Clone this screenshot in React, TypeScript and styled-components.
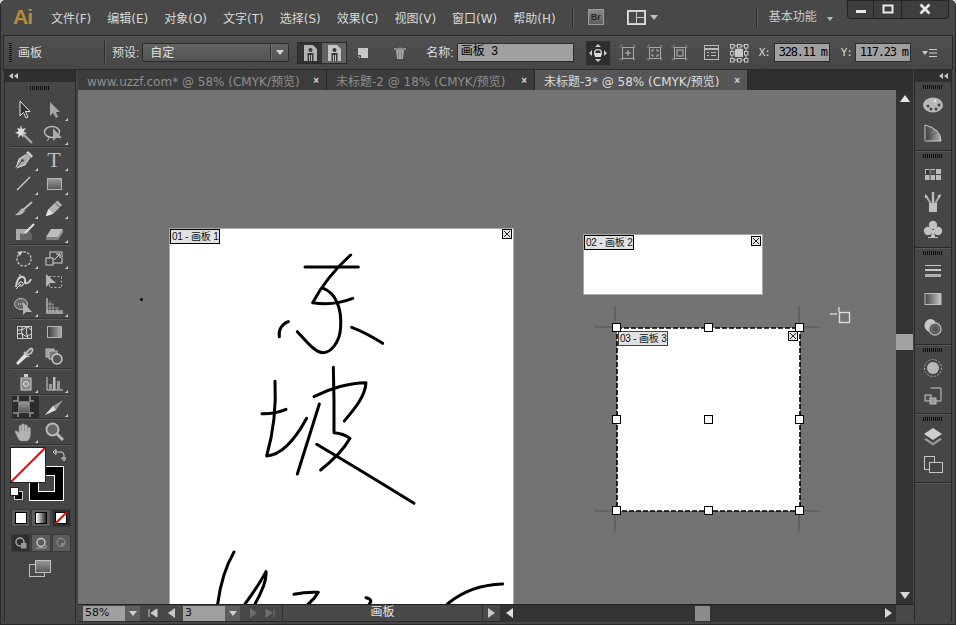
import React from "react";
import styled, { createGlobalStyle } from "styled-components";

const Global = createGlobalStyle`
  html, body { margin: 0; padding: 0; background: #d8d8d8; overflow: hidden; }
  * { box-sizing: border-box; }
`;
const UI = `"DejaVu Sans", "Noto Sans CJK SC", sans-serif`;
const CJK = `"Liberation Sans", "Noto Sans CJK SC", sans-serif`;

const Win = styled.div`
  width: 956px; height: 625px; background: #454545; display: flex; flex-direction: column;
  border-radius: 6px 6px 0 0; overflow: hidden; padding: 0 4px 3px; font: 12px ${UI}; color: #e0e0e0;
  box-shadow: inset 0 0 0 1px #2a2a2a;
`;
const Defs = styled.svg`display: block; width: 0; height: 0; flex: none;`;
const MenuBar = styled.div`height: 35px; flex: none; display: flex; align-items: flex-start; padding: 0 6px 0 12px; background: #484848; margin: 0 -3px;`;
const Logo = styled.div`font: bold 21px/34px "Liberation Sans", sans-serif; letter-spacing: -1px; color: #b98a3e; width: 38px; height: 35px; flex: none;`;
const MenuItems = styled.div`display: flex; gap: 16px; height: 35px; align-items: center; flex: none;`;
const MenuItem = styled.span`color: #d8d8d8; font-size: 12px; white-space: nowrap; margin-top: -1px;`;
const VSep = styled.div<{ $ml: number }>`height: 21px; background: #2e2e2e; border-right: 1px solid #5c5c5c; margin: 7px 0 0 ${p => p.$ml}px; flex: none; width: 2px;`;
const BrBox = styled.div`width: 16px; height: 16px; margin: 9px 0 0 14px; background: linear-gradient(#8a8a8a, #5e5e5e); border: 1px solid #9c9c9c; color: #2a2a2a; font: bold 9px/14px "Liberation Sans", sans-serif; text-align: center; flex: none;`;
const ArrangeWrap = styled.div`display: flex; align-items: center; margin: 9px 0 0 23px; height: 17px; gap: 4px; flex: none;`;
const Workspace = styled.span`margin: 7px 0 0 11px; width: 58px; font-size: 12px; color: #c8c8c8; white-space: nowrap; flex: none;`;
const WorkspaceTri = styled.div`margin-top: 17px; flex: none;`;
const WinBtns = styled.div`display: flex; width: 102px; height: 19px; margin-left: auto; background: #3e3e3e; border: 1px solid #222; border-top: none; border-radius: 0 0 4px 4px; flex: none; box-shadow: inset 0 1px 0 #2a2a2a;`;
const WinBtn = styled.div<{ $w: number }>`width: ${p => p.$w}px; display: flex; align-items: center; justify-content: center; border-right: 1px solid #262626; &:last-child { border-right: none; }`;
const SmallTri = styled.i<{ $c?: string; $s?: number }>`display: block; width: 0; height: 0; border-left: ${p => p.$s ?? 4}px solid transparent; border-right: ${p => p.$s ?? 4}px solid transparent; border-top: ${p => (p.$s ?? 4) + 1}px solid ${p => p.$c || "#bdbdbd"}; flex: none;`;

const ControlBar = styled.div`height: 35px; flex: none; display: flex; align-items: center; padding-left: 5px; margin: 0 -1px; background: linear-gradient(#505050, #464646); border: 1px solid #2a2a2a;`;
const CGrip = styled.div`width: 3px; height: 19px; background: repeating-linear-gradient(#141414 0 1px, transparent 1px 2px); flex: none;`;
const CLabel = styled.span<{ $ml: number; $w?: number }>`margin-left: ${p => p.$ml}px; font: 12px ${CJK}; color: #dcdcdc; white-space: nowrap; flex: none; padding-bottom: 3px; ${p => p.$w ? `width:${p.$w}px;` : ""}`;
const CSep = styled.div<{ $ml: number }>`width: 1px; height: 24px; background: #2e2e2e; box-shadow: 1px 0 0 #5a5a5a; margin-left: ${p => p.$ml}px; flex: none;`;
const Select = styled.div`margin-left: 3px; width: 147px; height: 19px; background: linear-gradient(#646464, #525252); border: 1px solid #2c2c2c; border-radius: 2px; display: flex; align-items: center; padding-left: 7px; font: 12px ${CJK}; color: #e0e0e0; flex: none;`;
const SelectText = styled.span`flex: 1; padding-bottom: 2px;`;
const SelectDrop = styled.div`width: 18px; height: 15px; border-left: 1px solid #2e2e2e; box-shadow: inset 1px 0 0 #707070; display: flex; align-items: center; justify-content: center; flex: none;`;
const Seg = styled.div`display: flex; margin-left: 8px; height: 22px; border: 1px solid #2a2a2a; background: #333; flex: none;`;
const SegBtn = styled.div<{ $on?: boolean }>`width: 24px; display: flex; align-items: center; justify-content: center; background: ${p => p.$on ? "#333" : "#626262"};`;
const CIcon = styled.div<{ $ml: number; $w?: number }>`margin-left: ${p => p.$ml}px; width: ${p => p.$w || 20}px; height: 22px; display: flex; align-items: center; justify-content: center; flex: none;`;
const Field = styled.div<{ $ml: number; $w: number; $mono?: boolean }>`
  margin-left: ${p => p.$ml}px; width: ${p => p.$w}px; height: 19px; background: #a0a0a0; border: 1px solid #2c2c2c; color: #000; flex: none; white-space: pre;
  font: ${p => p.$mono ? `12px/17px "DejaVu Sans Mono", monospace` : `12px/15px ${CJK}`}; padding-left: ${p => p.$mono ? 4 : 3}px; letter-spacing: ${p => p.$mono ? "-1.2px" : "0"};
`;
const MoveBtn = styled.div`margin-left: 12px; width: 24px; height: 24px; background: #2e2e2e; display: flex; align-items: center; justify-content: center; flex: none;`;
const AxisLabel = styled.span<{ $ml: number }>`margin-left: ${p => p.$ml}px; width: 13px; font: 11px "DejaVu Sans Mono", monospace; color: #d8d8d8; letter-spacing: -1px; flex: none;`;

const Body = styled.div`flex: 1; min-height: 0; display: flex;`;
const LeftDock = styled.div`width: 72px; flex: none; margin-right: 2px; display: flex; flex-direction: column; background: #464646; border-left: 1px solid #2a2a2a; border-right: 1px solid #2a2a2a;`;
const DockHead = styled.div<{ $right?: boolean }>`height: 12px; flex: none; background: #2f2f2f; color: #c0c0c0; display: flex; align-items: center; justify-content: ${p => p.$right ? "flex-end" : "flex-start"}; padding: 0 ${p => p.$right ? "3px" : "0"} 0 ${p => p.$right ? "0" : "4px"};`;
const DTri = styled.i`display: block; width: 0; height: 0; border-top: 3px solid transparent; border-bottom: 3px solid transparent; border-right: 4px solid #c8c8c8; margin-right: 0.5px;`;
const Grip = styled.div<{ $dock?: boolean }>`width: 20px; height: 4px; background: repeating-linear-gradient(90deg, #0e0e0e 0 1px, transparent 1px 2px); flex: none; margin: ${p => p.$dock ? "3px 0 2px" : "4px 0 8px 25px"};`;
const Tools = styled.div`display: flex; flex-direction: column; flex: none;`;
const ToolRow = styled.div<{ $h?: number }>`height: ${p => p.$h ?? 24}px; display: flex; padding-left: 4px; flex: none;`;
const ToolCell = styled.div<{ $more?: boolean; $on?: boolean }>`
  width: 30px; display: flex; align-items: center; justify-content: center; position: relative; color: #c8c8c8;
  ${p => p.$on ? `&::before { content: ""; position: absolute; left: 3px; top: 0; width: 27px; height: 22px; background: #2c2c2c; border-radius: 2px; }` : ""}
  & > svg, & > span { position: relative; }
  ${p => p.$more ? `&::after { content: ""; position: absolute; right: 1px; bottom: 1px; width: 0; height: 0; border-left: 3px solid transparent; border-bottom: 3px solid #d0d0d0; }` : ""}
`;
const Sep = styled.div`height: 2px; margin: 0 4px 0 5px; background: #343434; border-bottom: 1px solid #585858; flex: none;`;
const TextT = styled.span`font: 22px/24px "Liberation Serif", serif; color: #bdbdbd;`;
const FillStroke = styled.div`position: relative; height: 56px; flex: none;`;
const StrokeBox = styled.div`position: absolute; left: 24px; top: 20px; width: 35px; height: 35px; background: #000; border: 1px solid #fff; display: flex; align-items: center; justify-content: center;`;
const StrokeHole = styled.div`width: 17px; height: 17px; background: #454545; border: 1px solid #fff;`;
const FillBox = styled.div`position: absolute; left: 5px; top: 1px; width: 36px; height: 36px; background: #fff; border: 1px solid #222;`;
const Abs = styled.div<{ $l: number; $t: number }>`position: absolute; left: ${p => p.$l}px; top: ${p => p.$t}px; line-height: 0;`;
const ModeRow = styled.div`display: flex; gap: 1px; margin: 7px 0 0 6px; height: 18px; width: 60px; flex: none;`;
const ModeBtn = styled.div<{ $on?: boolean }>`flex: 1; background: ${p => p.$on ? "#2e2e2e" : "#5c5c5c"}; border: 1px solid #3a3a3a; display: flex; align-items: center; justify-content: center;`;
const Swatch = styled.div<{ $kind: string }>`width: 12px; height: 12px; border: 1px solid #000; background: ${p => p.$kind === "grad" ? "linear-gradient(90deg,#fff,#222)" : "#fff"};`;
const ScreenMode = styled.div`display: flex; justify-content: center; margin-top: 8px; flex: none;`;

const DocArea = styled.div`flex: 1; min-width: 0; display: flex; flex-direction: column;`;
const Tabs = styled.div`height: 20px; flex: none; display: flex; background: #2f2f2f;`;
const Tab = styled.div<{ $w: number; $on?: boolean }>`
  width: ${p => p.$w}px; flex: none; display: flex; align-items: center; justify-content: space-between; padding: 0 7px 0 9px; white-space: pre;
  background: ${p => p.$on ? "#565656" : "#3c3c3c"}; color: ${p => p.$on ? "#dedede" : "#8e8e8e"}; border-right: 1px solid #282828; font-size: 12px;
`;
const TabClose = styled.span`font: bold 10px "Liberation Sans", sans-serif; color: #d8d8d8;`;
const Mid = styled.div`flex: 1; min-height: 0; display: flex;`;
const Canvas = styled.div`flex: 1; position: relative; overflow: hidden; background: #737373;`;
const Board = styled.div<{ $x: number; $y: number; $w: number; $h: number; $sel?: boolean }>`
  position: absolute; left: ${p => p.$x}px; top: ${p => p.$y}px; width: ${p => p.$w}px; height: ${p => p.$h}px; background: #fff;
  border: ${p => p.$sel ? "none" : "1px solid #a8a8a8"};
`;
const BoardLabel = styled.div<{ $x: number; $y: number; $soft?: boolean }>`
  position: absolute; left: ${p => p.$x}px; top: ${p => p.$y}px; height: 15px; width: 50px; background: #e2e2e2; border: 1px solid ${p => p.$soft ? "#444" : "#000"};
  color: #111; font: 10px/13px ${CJK}; padding-left: 1px; white-space: pre; z-index: 2; letter-spacing: -0.2px;
`;
const BoardClose = styled.div<{ $x: number; $y: number }>`position: absolute; left: ${p => p.$x}px; top: ${p => p.$y}px; line-height: 0; z-index: 2;`;
const Handle = styled.div<{ $x: number; $y: number }>`
  position: absolute; left: ${p => p.$x}%; top: ${p => p.$y}%; width: 9px; height: 9px; margin: -5px 0 0 -5px; background: #fff; border: 1px solid #000; z-index: 3;
`;
const Stroke = styled.svg`position: absolute; left: 0; top: 0; display: block;`;
const Dashes = styled.svg`position: absolute; left: 0; top: 0; display: block; overflow: visible;`;
const Marks = styled.svg`position: absolute; display: block;`;
const Dot = styled.div`position: absolute; left: 62px; top: 208px; width: 3px; height: 3px; border-radius: 50%; background: #000;`;
const VScroll = styled.div`width: 17px; flex: none; background: #333; display: flex; flex-direction: column; align-items: center; justify-content: space-between; padding: 5px 0; position: relative;`;
const Thumb = styled.div`position: absolute; left: 0; top: 244px; width: 17px; height: 16px; background: #a2a2a2;`;
const UpTri = styled.i<{ $down?: boolean; $c?: string }>`display: block; width: 0; height: 0; border-left: 5px solid transparent; border-right: 5px solid transparent; ${p => p.$down ? `border-top: 7px solid ${p.$c || "#d8d8d8"};` : `border-bottom: 7px solid ${p.$c || "#e8e8e8"};`}`;
const Status = styled.div`height: 18px; flex: none; display: flex; align-items: center; background: #484848; border-top: 1px solid #222; border-bottom: 1px solid #2a2a2a;`;
const ZoomField = styled.div<{ $ml: number }>`width: 42px; height: 15px; margin-left: ${p => p.$ml}px; background: #a0a0a0; color: #111; font: 11px/14px ${UI}; padding-left: 2px; flex: none;`;
const DropBtn = styled.div`width: 15px; height: 15px; background: #5e5e5e; display: flex; align-items: center; justify-content: center; flex: none;`;
const NavIcon = styled.div<{ $ml: number }>`margin-left: ${p => p.$ml}px; width: 12px; height: 14px; display: flex; align-items: center; justify-content: center; flex: none;`;
const StatusLabel = styled.div`width: 201px; flex: none; text-align: center; font: 12px/15px ${CJK}; color: #e6e6e6; border-left: 1px solid #333; border-right: 1px solid #333; margin-left: 6px; height: 16px;`;
const HScroll = styled.div`flex: 1; height: 17px; margin-left: 3px; background: #333; display: flex; align-items: center; justify-content: space-between; padding: 0 4px 0 6px; position: relative;`;
const HThumb = styled.div`position: absolute; left: 195px; top: 1px; width: 15px; height: 15px; background: #8c8c8c;`;
const SideTri = styled.i<{ $left?: boolean; $c?: string }>`display: block; width: 0; height: 0; border-top: 5px solid transparent; border-bottom: 5px solid transparent; ${p => p.$left ? `border-right: 7px solid ${p.$c || "#e0e0e0"};` : `border-left: 7px solid ${p.$c || "#d8d8d8"};`}`;
const Corner = styled.div`width: 17px; height: 17px; flex: none; background: #484848;`;

const RightDock = styled.div`width: 38px; flex: none; margin-left: 1px; display: flex; flex-direction: column; background: #464646; border-left: 1px solid #2a2a2a; border-right: 1px solid #2a2a2a;`;
const DockGroup = styled.div`display: flex; flex-direction: column; align-items: center; border-bottom: 1px solid #2a2a2a; flex: none; padding-bottom: 3px; box-shadow: 0 1px 0 #585858;`;
const DockIcon = styled.div`height: 28px; width: 100%; display: flex; align-items: center; justify-content: center; flex: none;`;

const Svg: React.FC<{ s?: number; w?: number; h?: number; children: React.ReactNode }> = ({ s = 24, w, h, children }) => (
  <svg width={w ?? s} height={h ?? s} viewBox={`0 0 ${w ?? s} ${h ?? s}`} fill="none" style={{ display: "block" }}>{children}</svg>
);

const icons: Record<string, React.ReactNode> = {
  select: <path d="M8 3V18L11.5 14.5L14 20L16 19L13.5 13.5H18Z" fill="#333" stroke="#e4e4e4" />,
  direct: <path d="M8 4V18L11 15L14 20L16 19L14 14H18Z" fill="#a8a8a8" />,
  wand: <><path d="M9 3L10 7L14 6L11.5 9.5L15 11.5L11 12L11.5 16L9 13L6 16L6.5 12L3 11L6.5 9L5 5.5L8 7Z" fill="#dcdcdc" /><path d="M11 12L20 21" stroke="#aaa" strokeWidth="2.2" /></>,
  lasso: <><ellipse cx="10" cy="10" rx="7.5" ry="5.5" stroke="#bbb" strokeWidth="1.4" /><path d="M6 15Q8 17 5 19" stroke="#bbb" /><path d="M11 6V19L14 16L20 16Z" fill="#ababab" /></>,
  pen: <><path d="M4 20L7 11L14 6.5L17.5 10L13 17Z" fill="#aaa" stroke="#ddd" /><path d="M4 20L10 13" stroke="#444" /><circle cx="10.5" cy="12.5" r="1.3" fill="#444" /><path d="M15 4L20 9" stroke="#ccc" strokeWidth="3" /></>,
  line: <path d="M5 18L18 5" stroke="#cfcfcf" strokeWidth="1.2" />,
  rect: <rect x="5.5" y="6.5" width="14" height="11" fill="url(#gv)" stroke="#b4b4b4" />,
  brush: <><path d="M20 6L11 14" stroke="#bbb" strokeWidth="2" /><path d="M3 19Q10 20 13 15L10 12Q7 16 3 19Z" fill="#b5b5b5" /></>,
  pencil: <><path d="M4 20L6.5 13.5L15.5 5L19.5 9L11 17.5Z" fill="#b4b4b4" stroke="#ddd" strokeWidth=".6" /><path d="M4 20L6.5 13.5L11 17.5Z" fill="#e4e4e4" /><path d="M13.5 7L17.5 11" stroke="#555" /></>,
  blob: <><path d="M4 9H17V20H4Z" fill="#aaa" /><path d="M8 13Q13 16 17 11L20 14V20H8Z" fill="#666" /><path d="M22 4L13 13" stroke="#ddd" strokeWidth="2.2" /></>,
  eraser: <><path d="M4 17L9 9H21L16 17Z" fill="#bdbdbd" /><path d="M4 17H16V20H4Z" fill="#808080" /><path d="M16 17L21 9V12L16 20Z" fill="#999" /></>,
  rotate: <><circle cx="12" cy="13" r="7" stroke="#bbb" strokeWidth="1.4" strokeDasharray="2.6 1.4" /><path d="M5 6L11 5L8 10Z" fill="#ccc" /></>,
  scale: <><rect x="8" y="6" width="12" height="11" stroke="#bbb" strokeWidth="1.2" /><rect x="4" y="12" width="7" height="7" fill="#464646" stroke="#bbb" strokeWidth="1.2" /><path d="M12 14L18 8M14 8H18V12" stroke="#ddd" /></>,
  warp: <><path d="M4 17Q5 8 9 7Q14 6 13 13Q17 14 19 9" stroke="#ccc" strokeWidth="2" /><circle cx="9" cy="14" r="2.2" fill="#464646" stroke="#eee" /><path d="M4 19L9 14M8 7V4" stroke="#ddd" /></>,
  free: <><rect x="7.5" y="6.5" width="12" height="11" stroke="#bbb" strokeDasharray="2 2" /><path d="M4 4V17L8 13H14Z" fill="#b4b4b4" /></>,
  builder: <><ellipse cx="9" cy="10" rx="6.5" ry="5.5" fill="#666" stroke="#bbb" /><path d="M6 10H12" stroke="#eee" strokeDasharray="1 1" /><path d="M11 8V21L14 18H20Z" fill="#b4b4b4" /></>,
  persp: <><path d="M5 4V19H21" stroke="#bbb" strokeWidth="1.4" /><path d="M8 7V19M11 10V19M15 14V19M5 10L11 10M5 14L17 14" stroke="#999" /><path d="M5 17H21" stroke="#ddd" /></>,
  mesh: <><rect x="5.5" y="6.5" width="14" height="12" fill="#444" stroke="#ccc" /><path d="M6 10Q10 11 13 8T19 10M6 14Q10 12 12 15T19 14M10 7Q9 12 11 18M15 7Q13 12 16 18" stroke="#ddd" /></>,
  grad: <rect x="5.5" y="6.5" width="14" height="11" fill="url(#gh)" stroke="#b4b4b4" />,
  drop: <><path d="M5 20L4 19L13 9L16 12L6 21Z" fill="#e0e0e0" /><path d="M12 8L17 13M14 9L18 5Q20 4 20.5 5.5T19 9L15.5 11Z" stroke="#bbb" strokeWidth="2" /></>,
  blend: <><rect x="4" y="5" width="8" height="8" fill="#999" stroke="#bbb" /><rect x="7" y="7" width="8" height="8" fill="#777" stroke="#bbb" /><circle cx="15" cy="15" r="5" fill="#555" stroke="#ccc" strokeWidth="1.4" /></>,
  spray: <><path d="M3 6h.1M6 4h.1M8 6h.1M5 8h.1M8 9h.1M11 5h.1" stroke="#ddd" strokeWidth="1.4" /><rect x="12" y="4" width="4" height="3" fill="#ccc" /><rect x="9" y="8" width="10" height="12" fill="#888" stroke="#ccc" /><circle cx="14" cy="14" r="2.4" stroke="#eee" /></>,
  graph: <><path d="M5 7V20H21" stroke="#ccc" /><rect x="7" y="14" width="3" height="6" fill="#999" /><rect x="11" y="7" width="2.5" height="13" fill="#bbb" /><rect x="15" y="11" width="3" height="9" fill="#999" /></>,
  artboard: <><rect x="6.5" y="6.5" width="11" height="11" fill="url(#gv)" stroke="#777" /><path d="M1 6H22M1 18H22M6 1V22M18 1V22" stroke="#c8c8c8" strokeDasharray="5 12 5" /></>,
  slice: <><path d="M3 20L11 11L21 5L14 15Z" fill="#999" /><path d="M3 20L11 11L14 15Z" fill="#ddd" /></>,
  hand: <path d="M7 20L3 12Q3 10 5 11L7 13V6Q8 4.5 9.5 6V11V4.5Q11 3 12.5 4.5V11V5.5Q14 4 15.5 5.5V11.5V8Q17 6.5 18.5 8V15Q18 20 15 21H9Z" fill="#b4b4b4" stroke="#888" strokeWidth=".5" />,
  zoom: <><circle cx="10.5" cy="9.5" r="6" fill="#666" stroke="#b8b8b8" strokeWidth="2" /><path d="M15 14L21 20" stroke="#b8b8b8" strokeWidth="3" /></>,
  palette: <><ellipse cx="12" cy="12" rx="10" ry="7.5" fill="#b8b8b8" /><circle cx="7" cy="13" r="1.5" fill="#444" /><circle cx="10" cy="16" r="1.5" fill="#444" /><circle cx="15" cy="16" r="1.5" fill="#444" /><circle cx="18" cy="12" r="1.5" fill="#444" /><circle cx="14" cy="8" r="1.5" fill="#ddd" /></>,
  guide: <><path d="M4 4V20H20Q20 8 4 4Z" fill="url(#gh)" stroke="#ccc" /><path d="M4 20L11 7M4 20L16 11" stroke="#4a4a4a" strokeWidth=".6" /></>,
  swatches: <><rect x="4" y="7" width="16" height="11" fill="#bbb" /><path d="M9 7V18M14.5 7V18M4 12.5H20" stroke="#464646" /><rect x="5" y="8" width="3.5" height="4" fill="#333" /><rect x="10" y="8" width="4" height="4" fill="#555" /></>,
  cup: <><rect x="8" y="13" width="8" height="9" fill="#c0c0c0" /><path d="M12 13V2" stroke="#bbb" strokeWidth="2.4" /><path d="M9.5 13L5 6M14.5 13L18 7" stroke="#aaa" strokeWidth="2" /><path d="M4 4L7 7L4 8ZM16 6L20 4L19 8Z" fill="#ccc" /></>,
  club: <><circle cx="12" cy="7" r="4.2" fill="#c2c2c2" /><circle cx="7" cy="13" r="4.2" fill="#c2c2c2" /><circle cx="17" cy="13" r="4.2" fill="#c2c2c2" /><path d="M11 12H13L14 19H17V20H7V19H10Z" fill="#c2c2c2" /></>,
  stroke: <><path d="M4 6.5H20" stroke="#c8c8c8" /><path d="M4 11H20" stroke="#c8c8c8" strokeWidth="2" /><path d="M4 16.5H20" stroke="#b0b0b0" strokeWidth="3" /></>,
  gradR: <rect x="4" y="6.5" width="16" height="11" fill="url(#gh2)" stroke="#bbb" />,
  transp: <><ellipse cx="9.5" cy="10.5" rx="6" ry="6.5" fill="#c8c8c8" /><circle cx="14" cy="14" r="6" fill="#555" stroke="#b4b4b4" strokeWidth="1.4" /><circle cx="14" cy="14" r="3.5" stroke="#777" /></>,
  appear: <><circle cx="12" cy="12" r="8.5" stroke="#a8a8a8" strokeDasharray="2 1.5" /><circle cx="12" cy="12" r="6" fill="#b8b8b8" /></>,
  styles: <><path d="M9.5 4H20V17H9.5V11" stroke="#c8c8c8" /><rect x="4" y="11" width="6" height="6" fill="#555" stroke="#c8c8c8" /><rect x="9" y="14" width="6" height="6" fill="#999" stroke="#bbb" /></>,
  layers: <><path d="M12 3L21 9L12 15L3 9Z" fill="#cfcfcf" /><path d="M5 13L12 18L19 13L21 14.5L12 20.5L3 14.5Z" fill="#999" /></>,
  boards: <><rect x="3.5" y="3.5" width="10" height="13" fill="#464646" stroke="#c8c8c8" /><rect x="8.5" y="9.5" width="13" height="10" fill="#464646" stroke="#c8c8c8" /></>,
};

const Ic: React.FC<{ n: string }> = ({ n }) => <Svg>{icons[n]}</Svg>;

const toolGroups: [string, boolean][][][] = [
  [[["select", false], ["direct", true]], [["wand", false], ["lasso", true]]],
  [[["pen", true], ["T", true]], [["line", true], ["rect", true]], [["brush", true], ["pencil", true]], [["blob", false], ["eraser", true]]],
  [[["rotate", true], ["scale", true]], [["warp", true], ["free", false]], [["builder", true], ["persp", true]]],
  [[["mesh", false], ["grad", false]], [["drop", true], ["blend", false]]],
  [[["spray", true], ["graph", true]]],
  [[["artboard", false], ["slice", true]]],
  [[["hand", true], ["zoom", false]]],
];

const dockGroups = [["palette", "guide"], ["swatches", "cup", "club"], ["stroke", "gradR", "transp"], ["appear", "styles"], ["layers", "boards"]];
const menu = ["文件(F)", "编辑(E)", "对象(O)", "文字(T)", "选择(S)", "效果(C)", "视图(V)", "窗口(W)", "帮助(H)"];
const handles = [0, 50, 100].flatMap(y => [0, 50, 100].map(x => ({ x, y })));

const CloseBox = () => (
  <svg width="10" height="10" viewBox="0 0 10 10" style={{ display: "block" }}>
    <rect x=".5" y=".5" width="9" height="9" fill="#e4e4e4" stroke="#000" /><path d="M2 2L8 8M8 2L2 8" stroke="#222" />
  </svg>
);
const Person: React.FC<{ light?: boolean }> = ({ light }) => (
  <Svg w={15} h={18}>
    <path d="M1 1H10L14 5V17H1Z" fill={light ? "#c4c4c4" : "#b4b4b4"} />
    <circle cx="7.5" cy="6" r="2" fill="#3a3a3a" /><path d="M4.5 17V9H10.5V17H9V11H8V17H7V11H6V17Z" fill="#3a3a3a" />
  </Svg>
);
const Frame: React.FC<{ kind: string }> = ({ kind }) => (
  <Svg w={18} h={18}>
    <path d="M3 .5V17M15 .5V17M.5 3H17M.5 15H17" stroke="#8e8e8e" strokeDasharray="2 12 2" />
    <rect x="3.5" y="3.5" width="11" height="11" stroke="#a8a8a8" />
    {kind === "plus" && <path d="M9 6V12M6 9H12" stroke="#bbb" />}
    {kind === "corners" && <path d="M6 8V6H8M10 6H12V8M12 10V12H10M8 12H6V10" stroke="#bbb" />}
    {kind === "rect" && <rect x="6" y="6" width="6" height="6" stroke="#bbb" />}
  </Svg>
);

export default function App() {
  return (
    <>
      <Global />
      <Win>
        <Defs aria-hidden="true">
          <defs>
            <linearGradient id="gv" x1="0" y1="0" x2="0" y2="1"><stop offset="0" stopColor="#9a9a9a" /><stop offset="1" stopColor="#565656" /></linearGradient>
            <linearGradient id="gh" x1="0" y1="0" x2="1" y2="0"><stop offset="0" stopColor="#3a3a3a" /><stop offset="1" stopColor="#b0b0b0" /></linearGradient>
            <linearGradient id="gh2" x1="0" y1="0" x2="1" y2="0"><stop offset="0" stopColor="#444" /><stop offset="1" stopColor="#c8c8c8" /></linearGradient>
          </defs>
        </Defs>
        <MenuBar>
          <Logo>Ai</Logo>
          <MenuItems>{menu.map(m => <MenuItem key={m}>{m}</MenuItem>)}</MenuItems>
          <VSep $ml={16} />
          <BrBox>Br</BrBox>
          <ArrangeWrap>
            <Svg w={19} h={15}><rect x=".5" y=".5" width="18" height="14" fill="#c8c8c8" stroke="#ddd" /><rect x="2" y="2" width="7" height="11" fill="#4a4a4a" /><rect x="10" y="2" width="7" height="5" fill="#4a4a4a" /><rect x="10" y="8" width="7" height="5" fill="#4a4a4a" /></Svg>
            <SmallTri />
          </ArrangeWrap>
          <VSep $ml={98} />
          <Workspace>基本功能</Workspace>
          <WorkspaceTri><SmallTri $s={3} /></WorkspaceTri>
          <WinBtns>
            <WinBtn $w={27}><Svg w={12} h={12}><rect x="1" y="7" width="10" height="3" fill="#e8e8e8" /></Svg></WinBtn>
            <WinBtn $w={28}><Svg w={12} h={12}><rect x="1.5" y="2.5" width="9" height="7" stroke="#e8e8e8" strokeWidth="2" /></Svg></WinBtn>
            <WinBtn $w={47}><Svg w={12} h={12}><path d="M1.5 1.5L10.5 10.5M10.5 1.5L1.5 10.5" stroke="#e8e8e8" strokeWidth="2.6" /></Svg></WinBtn>
          </WinBtns>
        </MenuBar>

        <ControlBar>
          <CGrip />
          <CLabel $ml={6} $w={62}>画板</CLabel>
          <CSep $ml={24} />
          <CLabel $ml={7}>预设:</CLabel>
          <Select><SelectText>自定</SelectText><SelectDrop><SmallTri $c="#d0d0d0" /></SelectDrop></Select>
          <Seg><SegBtn $on><Person /></SegBtn><SegBtn><Person light /></SegBtn></Seg>
          <CIcon $ml={6}><Svg w={12} h={12}><path d="M1 1H11V11H4V8H1Z" fill="#c8c8c8" /><path d="M1 9L3 11" stroke="#c8c8c8" /></Svg></CIcon>
          <CIcon $ml={17}><Svg w={14} h={14}><path d="M3 4H11L10 13H4Z" fill="#a8a8a8" /><path d="M5 2H9M5.5 5V12M8.5 5V12" stroke="#777" /><path d="M1 3H13" stroke="#c4c4c4" /></Svg></CIcon>
          <CLabel $ml={16}>名称:</CLabel>
          <Field $ml={3} $w={117}>画板  3</Field>
          <MoveBtn><Svg s={20}><circle cx="10" cy="10" r="3.4" stroke="#ccc" strokeWidth="1.4" /><rect x="7" y="10" width="6" height="4" fill="#ddd" /><path d="M10 1L7 4H13ZM10 19L7 16H13ZM1 10L4 7V13ZM19 10L16 7V13Z" fill="#ccc" /></Svg></MoveBtn>
          <CIcon $ml={8}><Frame kind="plus" /></CIcon>
          <CIcon $ml={7}><Frame kind="corners" /></CIcon>
          <CIcon $ml={5}><Frame kind="rect" /></CIcon>
          <CIcon $ml={12}><Svg w={15} h={15}><rect x=".5" y=".5" width="14" height="14" stroke="#bbb" /><path d="M1 4H14" stroke="#bbb" strokeWidth="2" /><path d="M3 7.5H5M7 7.5H12M3 10.5H5M7 10.5H12" stroke="#bbb" /></Svg></CIcon>
          <CIcon $ml={7}><Svg w={20} h={20}>{[1, 8, 15].flatMap(y => [1, 8, 15].map(x => (x === 8 && y === 8
            ? <rect key={x + "-" + y} x="6" y="6" width="8" height="8" fill="#c8c8c8" />
            : <rect key={x + "-" + y} x={x + .5} y={y + .5} width="3.5" height="3.5" stroke="#c8c8c8" />)))}<path d="M5 3H8M12 3H15M5 17H8M12 17H15M3 5V8M3 12V15M17 5V8M17 12V15" stroke="#c8c8c8" /></Svg></CIcon>
          <AxisLabel $ml={10}>X:</AxisLabel>
          <Field $ml={2} $w={56} $mono>328.11 m</Field>
          <AxisLabel $ml={11}>Y:</AxisLabel>
          <Field $ml={1} $w={56} $mono>117.23 m</Field>
          <CIcon $ml={9}><Svg w={16} h={10}><path d="M0 3H6L3 7Z" fill="#ccc" /><path d="M7 1.5H15M7 5H15M7 8.5H15" stroke="#ccc" /></Svg></CIcon>
        </ControlBar>

        <Body>
          <LeftDock>
            <DockHead><DTri /><DTri /></DockHead>
            <Grip />
            <Tools>
              {toolGroups.map((group, gi) => (
                <React.Fragment key={gi}>
                  {gi > 0 && <Sep />}
                  {group.map((row, ri) => (
                    <ToolRow key={ri} $h={row[0][0] === "artboard" ? 22 : 24}>
                      {row.map(([n, more]) => (
                        <ToolCell key={n} $more={more} $on={n === "artboard"}>
                          {n === "T" ? <TextT>T</TextT> : <Ic n={n} />}
                        </ToolCell>
                      ))}
                    </ToolRow>
                  ))}
                </React.Fragment>
              ))}
              <Sep />
            </Tools>
            <FillStroke>
              <StrokeBox><StrokeHole /></StrokeBox>
              <FillBox><Svg w={34} h={34}><path d="M0 34L34 0" stroke="#f00" strokeWidth="2" /></Svg></FillBox>
              <Abs $l={47} $t={2}><Svg w={14} h={14}><path d="M3 4H9Q12 4 12 7V11M1 4L4 1.5V6.5ZM12 13L9.5 10H14.5Z" stroke="#ccc" fill="none" strokeWidth="1" /></Svg></Abs>
              <Abs $l={5} $t={41}><Svg w={13} h={13}><rect x="4.5" y="4.5" width="8" height="8" fill="#000" stroke="#ccc" /><rect x=".5" y=".5" width="8" height="8" fill="#fff" stroke="#222" /></Svg></Abs>
            </FillStroke>
            <ModeRow>
              <ModeBtn><Swatch $kind="white" /></ModeBtn>
              <ModeBtn><Swatch $kind="grad" /></ModeBtn>
              <ModeBtn $on><Svg w={12} h={12}><rect x=".5" y=".5" width="11" height="11" fill="#fff" stroke="#000" /><path d="M0 12L12 0" stroke="#f00" strokeWidth="2" /></Svg></ModeBtn>
            </ModeRow>
            <ModeRow>
              <ModeBtn $on><Svg w={14} h={14}><circle cx="6" cy="6" r="4" stroke="#aaa" strokeWidth="1.4" /><rect x="7" y="7" width="5.5" height="5.5" fill="#999" /></Svg></ModeBtn>
              <ModeBtn><Svg w={14} h={14}><circle cx="7" cy="6.5" r="4" stroke="#ccc" strokeWidth="1.4" /><path d="M2 12H12V9" stroke="#aaa" /></Svg></ModeBtn>
              <ModeBtn><Svg w={14} h={14}><circle cx="7" cy="6.5" r="4" stroke="#888" strokeWidth="1.4" /><rect x="7" y="7" width="3" height="3" fill="#888" /></Svg></ModeBtn>
            </ModeRow>
            <ScreenMode><Svg w={22} h={17}><rect x=".5" y="4.5" width="15" height="12" fill="#4a4a4a" stroke="#c0c0c0" /><rect x="6.5" y=".5" width="15" height="12" fill="url(#gv)" stroke="#c0c0c0" /></Svg></ScreenMode>
          </LeftDock>

          <DocArea>
            <Tabs>
              <Tab $w={249}><span>www.uzzf.com* @ 58% (CMYK/预览)</span><TabClose>×</TabClose></Tab>
              <Tab $w={208}><span>未标题-2 @ 18% (CMYK/预览)</span><TabClose>×</TabClose></Tab>
              <Tab $w={213} $on><span>未标题-3* @ 58% (CMYK/预览)</span><TabClose>×</TabClose></Tab>
            </Tabs>
            <Mid>
              <Canvas>
                <Dot />
                <Board $x={91} $y={138} $w={345} $h={400}>
                  <BoardLabel $x={0} $y={0}>01 - 画板 1</BoardLabel>
                  <BoardClose $x={332} $y={0}><CloseBox /></BoardClose>
                  <Stroke width="343" height="398" viewBox="30 27 1029 1194" fill="none" stroke="#000" strokeWidth="9" strokeLinecap="round" strokeLinejoin="round">
                    <path d="M435 141H595" />
                    <path d="M572 105Q500 170 458 248Q520 258 578 235" />
                    <path d="M490 205C530 220 545 270 542 320C540 370 510 398 490 398C465 398 440 365 412 335" />
                    <path d="M358 350C355 330 365 312 385 305" />
                    <path d="M575 322C610 335 640 352 668 370" />
                    <path d="M345 484C348 540 345 620 320 708C370 705 410 650 440 595" />
                    <path d="M306 581Q345 582 378 568" />
                    <path d="M412 762L478 552" />
                    <path d="M462 530C510 505 570 488 618 488C615 530 585 565 553 603" />
                    <path d="M520 442Q523 540 522 638Q550 640 570 655Q545 700 482 750" />
                    <path d="M470 673Q600 750 762 850" />
                    <path d="M222 996Q185 1060 173 1152" />
                    <path d="M318 1055Q300 1090 255 1152M318 1055Q322 1085 285 1152" />
                    <path d="M402 1123Q440 1115 475 1117Q465 1135 445 1152" />
                    <path d="M618 1133Q640 1138 628 1152" />
                    <path d="M862 1152Q930 1095 1028 1092" />
                  </Stroke>
                </Board>
                <Board $x={505} $y={144} $w={180} $h={61}>
                  <BoardLabel $x={0} $y={0}>02 - 画板 2</BoardLabel>
                  <BoardClose $x={167} $y={1}><CloseBox /></BoardClose>
                </Board>
                <Marks width="230" height="234" viewBox="0 0 230 234" style={{ left: 517, top: 216 }}>
                  <path d="M20 0V24M204 0V24M0 21H24M200 21H225M20 204V226M204 204V226M0 205H24M200 205H225" stroke="#555" />
                </Marks>
                <Board $x={539} $y={238} $w={183} $h={183} $sel>
                  <Dashes width="183" height="183" viewBox="0 0 183 183" fill="none">
                    <rect x="0" y="0" width="183" height="183" stroke="#000" strokeWidth="1.6" strokeDasharray="5 2" />
                  </Dashes>
                  <BoardLabel $x={1} $y={3} $soft>03 - 画板 3</BoardLabel>
                  <BoardClose $x={171} $y={3}><CloseBox /></BoardClose>
                  {handles.map(h => <Handle key={`${h.x}-${h.y}`} $x={h.x} $y={h.y} />)}
                </Board>
                <Marks width="22" height="20" viewBox="0 0 22 20" style={{ left: 752, top: 215 }} fill="none">
                  <path d="M0 9H7M9 2V7" stroke="#fff" /><rect x="9.5" y="7.5" width="10" height="10" stroke="#ddd" strokeWidth="1.4" />
                </Marks>
              </Canvas>
              <VScroll><UpTri /><Thumb /><UpTri $down /></VScroll>
            </Mid>
            <Status>
              <ZoomField $ml={5}>58%</ZoomField>
              <DropBtn><SmallTri $c="#d0d0d0" /></DropBtn>
              <NavIcon $ml={7}><Svg w={10} h={10}><path d="M1 1V9M9 1V9L3 5Z" stroke="#ccc" fill="#ccc" /></Svg></NavIcon>
              <NavIcon $ml={6}><SideTri $left $c="#c8c8c8" /></NavIcon>
              <ZoomField $ml={6}>3</ZoomField>
              <DropBtn><SmallTri $c="#d0d0d0" /></DropBtn>
              <NavIcon $ml={7}><SideTri $c="#6e6e6e" /></NavIcon>
              <NavIcon $ml={5}><Svg w={10} h={10}><path d="M9 1V9M1 1V9L7 5Z" stroke="#6e6e6e" fill="#6e6e6e" /></Svg></NavIcon>
              <StatusLabel>画板</StatusLabel>
              <NavIcon $ml={2}><SideTri $c="#c8c8c8" /></NavIcon>
              <HScroll>
                <SideTri $left />
                <HThumb />
                <SideTri />
              </HScroll>
              <Corner />
            </Status>
          </DocArea>

          <RightDock>
            <DockHead $right><DTri /><DTri /></DockHead>
            {dockGroups.map(g => (
              <DockGroup key={g[0]}>
                <Grip $dock />
                {g.map(n => <DockIcon key={n}><Ic n={n} /></DockIcon>)}
              </DockGroup>
            ))}
          </RightDock>
        </Body>
      </Win>
    </>
  );
}
